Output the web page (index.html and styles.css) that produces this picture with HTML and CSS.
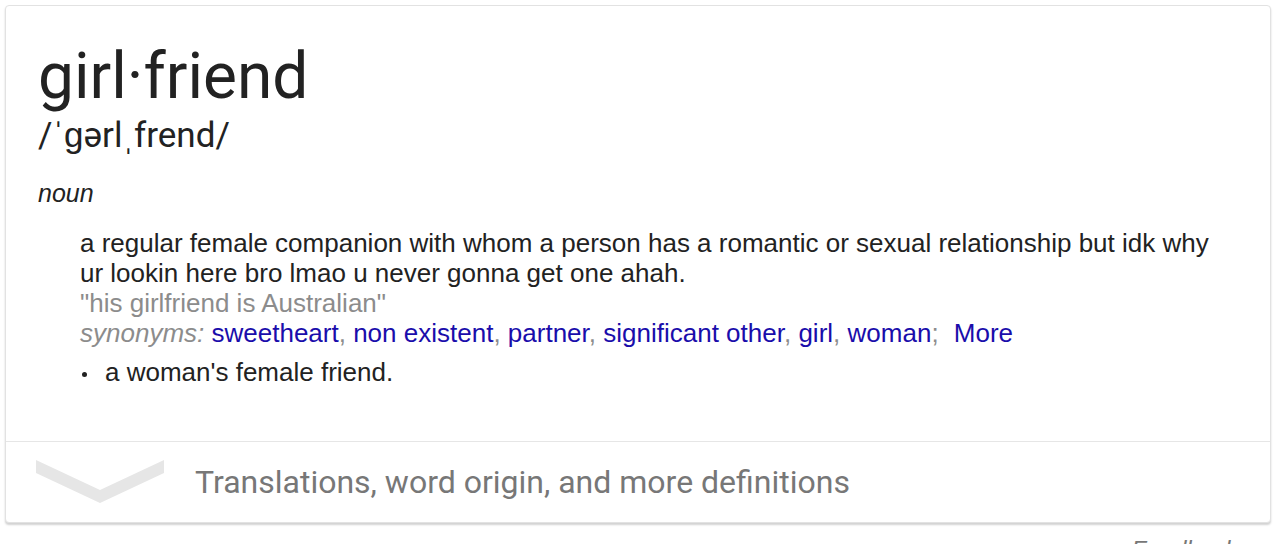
FILE: index.html
```html
<!DOCTYPE html>
<html>
<head>
<meta charset="utf-8">
<link rel="stylesheet" href="styles.css">
</head>
<body>
<div class="card">
  <div class="main">
    <div class="hw">girl·friend</div>
    <div class="pron">/ˈɡərlˌfrend/</div>
    <div class="pos">noun</div>
    <div class="defs">
      <div class="def">a regular female companion with whom a person has a romantic or sexual relationship but idk why ur lookin here bro lmao u never gonna get one ahah.</div>
      <div class="ex">"his girlfriend is Australian"</div>
      <div class="syn"><span class="synlab">synonyms:</span> <a>sweetheart</a><span class="sep">,</span> <a>non existent</a><span class="sep">,</span> <a>partner</a><span class="sep">,</span> <a>significant other</a><span class="sep">,</span> <a>girl</a><span class="sep">,</span> <a>woman</a><span class="sep">;</span> <a class="more">More</a></div>
      <ul class="sub">
        <li>a woman's female friend.</li>
      </ul>
    </div>
  </div>
  <div class="foot">
    <svg class="chev" width="128" height="43" viewBox="0 0 128 43"><polygon points="0,0 64,30 128,0 128,13 64,43 0,13" fill="#e6e6e6"/></svg>
    <span class="foottext">Translations, word origin, and more definitions</span>
  </div>
</div>
<div class="feedback">Feedback</div>
</body>
</html>
```
FILE: styles.css
```css
html, body { margin: 0; padding: 0; background: #fff; overflow: hidden; }
body { width: 1274px; height: 544px; }
.card {
  margin: 5px 3px 0 5px;
  border: 1px solid #e2e2e2;
  border-radius: 4px;
  box-shadow: 0 2px 2px rgba(0,0,0,0.18);
  background: #fff;
}
.main { padding: 39px 32px 54px 32px; }
.hw {
  font-family: Roboto, sans-serif;
  font-size: 64px;
  line-height: 64px;
  color: #222;
}
.pron {
  font-family: Roboto, sans-serif;
  font-size: 35px;
  line-height: 40px;
  color: #222;
  margin-top: 7px;
}
.pos {
  font-family: "Liberation Sans", Arial, sans-serif;
  font-style: italic;
  font-size: 25px;
  line-height: 30px;
  color: #222;
  margin-top: 22px;
}
.defs {
  padding-left: 42px;
  margin-top: 20px;
  font-family: "Liberation Sans", Arial, sans-serif;
  font-size: 26px;
  line-height: 30px;
  color: #222;
}
.ex { color: #8c8c8c; }
.synlab { color: #8c8c8c; font-style: italic; }
.sep { color: #8c8c8c; }
.syn a { color: #1a0dab; }
.syn a.more { margin-left: 8px; }
.sub { list-style: none; margin: 9px 0 0 0; padding: 0; }
.sub li { position: relative; padding-left: 25px; }
.sub li::before {
  content: "";
  position: absolute;
  left: 2px; top: 15px;
  width: 5px; height: 5px;
  border-radius: 50%;
  background: #222;
}
.foot {
  border-top: 1px solid #e6e6e6;
  height: 80px;
  display: flex;
  align-items: center;
}
.chev { margin-left: 30px; margin-top: -2px; flex: none; }
.foottext {
  margin-left: 31px;
  font-family: Roboto, sans-serif;
  font-size: 32px;
  color: #777;
}
.feedback {
  text-align: right;
  padding-right: 37px;
  margin-top: 12px;
  font-family: "Liberation Sans", Arial, sans-serif;
  font-style: italic;
  font-size: 24px;
  line-height: 30px;
  color: #777;
}
```
